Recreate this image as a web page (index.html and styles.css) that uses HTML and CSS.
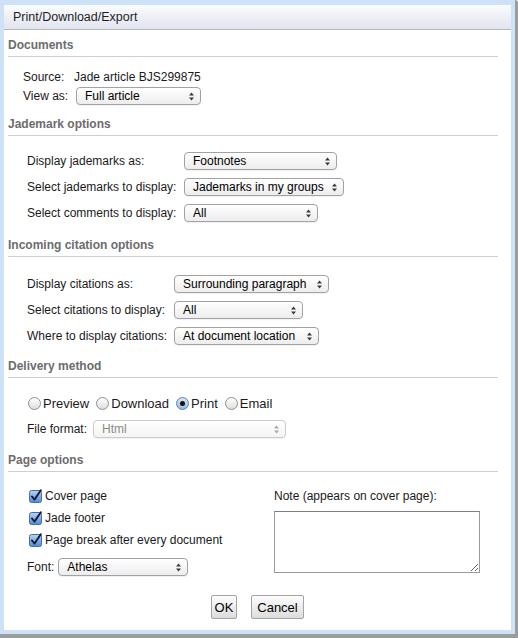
FILE: index.html
```html
<!DOCTYPE html>
<html>
<head>
<meta charset="utf-8">
<title>Print/Download/Export</title>
<link rel="stylesheet" href="styles.css">
</head>
<body>
<div class="frame">
  <div class="dialog">
    <div class="titlebar">Print/Download/Export</div>
    <div class="content">

      <section class="sec sec-docs">
        <h2 class="sec-title">Documents</h2>
        <div class="grid grid-docs">
          <span class="lbl">Source:</span>
          <span class="val">Jade article BJS299875</span>
          <span class="lbl">View as:</span>
          <div class="sel sel-view"><span>Full article</span><svg class="arr" width="5" height="9" viewBox="0 0 5 9"><polygon points="0,3.6 2.5,0.6 5,3.6"/><polygon points="0,5.4 2.5,8.4 5,5.4"/></svg></div>
        </div>
      </section>

      <section class="sec sec-jade">
        <h2 class="sec-title">Jademark options</h2>
        <div class="grid grid-jade">
          <span class="lbl">Display jademarks as:</span>
          <div class="sel sel-j1"><span>Footnotes</span><svg class="arr" width="5" height="9" viewBox="0 0 5 9"><polygon points="0,3.6 2.5,0.6 5,3.6"/><polygon points="0,5.4 2.5,8.4 5,5.4"/></svg></div>
          <span class="lbl">Select jademarks to display:</span>
          <div class="sel sel-j2"><span>Jademarks in my groups</span><svg class="arr" width="5" height="9" viewBox="0 0 5 9"><polygon points="0,3.6 2.5,0.6 5,3.6"/><polygon points="0,5.4 2.5,8.4 5,5.4"/></svg></div>
          <span class="lbl">Select comments to display:</span>
          <div class="sel sel-j3"><span>All</span><svg class="arr" width="5" height="9" viewBox="0 0 5 9"><polygon points="0,3.6 2.5,0.6 5,3.6"/><polygon points="0,5.4 2.5,8.4 5,5.4"/></svg></div>
        </div>
      </section>

      <section class="sec sec-cite">
        <h2 class="sec-title">Incoming citation options</h2>
        <div class="grid grid-cite">
          <span class="lbl">Display citations as:</span>
          <div class="sel sel-c1"><span>Surrounding paragraph</span><svg class="arr" width="5" height="9" viewBox="0 0 5 9"><polygon points="0,3.6 2.5,0.6 5,3.6"/><polygon points="0,5.4 2.5,8.4 5,5.4"/></svg></div>
          <span class="lbl">Select citations to display:</span>
          <div class="sel sel-c2"><span>All</span><svg class="arr" width="5" height="9" viewBox="0 0 5 9"><polygon points="0,3.6 2.5,0.6 5,3.6"/><polygon points="0,5.4 2.5,8.4 5,5.4"/></svg></div>
          <span class="lbl">Where to display citations:</span>
          <div class="sel sel-c3"><span>At document location</span><svg class="arr" width="5" height="9" viewBox="0 0 5 9"><polygon points="0,3.6 2.5,0.6 5,3.6"/><polygon points="0,5.4 2.5,8.4 5,5.4"/></svg></div>
        </div>
      </section>

      <section class="sec sec-deliv">
        <h2 class="sec-title">Delivery method</h2>
        <div class="body-deliv">
          <div class="radios">
            <span class="radio"><span class="dot"></span>Preview</span>
            <span class="radio"><span class="dot"></span>Download</span>
            <span class="radio"><span class="dot checked"></span>Print</span>
            <span class="radio"><span class="dot"></span>Email</span>
          </div>
          <div class="row-file">
            <span class="lbl">File format:</span>
            <div class="sel sel-file disabled"><span>Html</span><svg class="arr" width="5" height="9" viewBox="0 0 5 9"><polygon points="0,3.6 2.5,0.6 5,3.6"/><polygon points="0,5.4 2.5,8.4 5,5.4"/></svg></div>
          </div>
        </div>
      </section>

      <section class="sec sec-page">
        <h2 class="sec-title">Page options</h2>
        <div class="body-page">
          <div class="col-left">
            <div class="chk"><svg class="box" width="14" height="14" viewBox="0 0 14 14"><defs><linearGradient id="cb" x1="0" y1="0" x2="0" y2="1"><stop offset="0" stop-color="#b9d4f3"/><stop offset="1" stop-color="#4f8ad8"/></linearGradient></defs><rect x="0.5" y="1.5" width="12" height="12" rx="2" fill="url(#cb)" stroke="#4a6c9e"/><path d="M3 7.5 L5.6 10.6 L11.8 1.2" fill="none" stroke="#0d1a33" stroke-width="1.9" stroke-linecap="round" stroke-linejoin="round"/></svg>Cover page</div>
            <div class="chk"><svg class="box" width="14" height="14" viewBox="0 0 14 14"><rect x="0.5" y="1.5" width="12" height="12" rx="2" fill="url(#cb)" stroke="#4a6c9e"/><path d="M3 7.5 L5.6 10.6 L11.8 1.2" fill="none" stroke="#0d1a33" stroke-width="1.9" stroke-linecap="round" stroke-linejoin="round"/></svg>Jade footer</div>
            <div class="chk"><svg class="box" width="14" height="14" viewBox="0 0 14 14"><rect x="0.5" y="1.5" width="12" height="12" rx="2" fill="url(#cb)" stroke="#4a6c9e"/><path d="M3 7.5 L5.6 10.6 L11.8 1.2" fill="none" stroke="#0d1a33" stroke-width="1.9" stroke-linecap="round" stroke-linejoin="round"/></svg>Page break after every document</div>
            <div class="row-font">
              <span class="lbl">Font:</span>
              <div class="sel sel-font"><span>Athelas</span><svg class="arr" width="5" height="9" viewBox="0 0 5 9"><polygon points="0,3.6 2.5,0.6 5,3.6"/><polygon points="0,5.4 2.5,8.4 5,5.4"/></svg></div>
            </div>
          </div>
          <div class="col-right">
            <div class="note-lbl">Note (appears on cover page):</div>
            <textarea class="note"></textarea>
          </div>
        </div>
      </section>

      <div class="buttons">
        <button class="btn btn-ok">OK</button>
        <button class="btn btn-cancel">Cancel</button>
      </div>

    </div>
  </div>
</div>
</body>
</html>
```

FILE: styles.css
```css
html, body {
  margin: 0;
  padding: 0;
}
body {
  font-family: "Liberation Sans", Arial, sans-serif;
  font-size: 12px;
  color: #1a1a1a;
  background: #ffffff;
}
.frame {
  width: 518px;
  height: 638px;
  box-sizing: border-box;
  background: #cde2f6;
  padding: 5px 4px 4px 4px;
  border-right: 3px solid #9c9c9c;
  border-bottom: 4px solid #9c9c9c;
  border-top-right-radius: 3px;
}
.dialog {
  width: 507px;
  height: 625px;
  background: #ffffff;
  display: flex;
  flex-direction: column;
}
.titlebar {
  height: 24px;
  line-height: 24px;
  padding-left: 9px;
  font-size: 12.5px;
  color: #1e1e1e;
  background: linear-gradient(#fbfcfe, #e2e4ef);
  border-bottom: 1px solid #b4b4bc;
}
.content {
  padding: 0 13px 0 4px;
}
.sec-title {
  margin: 0;
  font-size: 12px;
  font-weight: bold;
  line-height: 14px;
  color: #6c6c6c;
  padding-bottom: 4px;
  border-bottom: 1px solid #cfcfcf;
}
.sec-docs .sec-title { margin-top: 8px; }
.sec-jade .sec-title { margin-top: 12px; }
.sec-cite .sec-title { margin-top: 16px; }
.sec-deliv .sec-title { margin-top: 14px; }
.sec-page .sec-title { margin-top: 15px; }

.grid {
  display: grid;
  align-items: center;
  grid-auto-rows: 18px;
}
.grid .sel { justify-self: start; }
.grid-docs {
  margin-top: 11px;
  padding-left: 15px;
  grid-template-columns: 51px auto;
  row-gap: 1px;
}
.grid-docs .sel { margin-left: 2px; }
.grid-jade {
  margin-top: 16px;
  padding-left: 19px;
  grid-template-columns: 157px auto;
  row-gap: 8px;
}
.grid-cite {
  margin-top: 18px;
  padding-left: 19px;
  grid-template-columns: 147px auto;
  row-gap: 8px;
}
.lbl, .val {
  line-height: 18px;
  white-space: nowrap;
}

.sel {
  height: 18px;
  box-sizing: border-box;
  display: flex;
  align-items: center;
  justify-content: space-between;
  border: 1px solid #a2a2a2;
  border-radius: 4px;
  background: linear-gradient(#ffffff, #ededed);
  box-shadow: 0 1px 1px rgba(0,0,0,0.06);
  padding: 0 6px 0 8px;
  font-size: 12px;
  line-height: 16px;
  color: #000;
  white-space: nowrap;
}
.sel .arr { fill: #3a3a3a; flex: none; }
.sel.disabled {
  border-color: #cbcbcb;
  color: #8a8a8a;
  background: linear-gradient(#ffffff, #f4f4f4);
}
.sel.disabled .arr { fill: #a8a8a8; }

.sel-view { width: 125px; }
.sel-j1 { width: 153px; }
.sel-j2 { width: 160px; }
.sel-j3 { width: 134px; }
.sel-c1 { width: 155px; }
.sel-c2 { width: 129px; }
.sel-c3 { width: 145px; }
.sel-file { width: 193px; }
.sel-font { width: 130px; }

.body-deliv {
  margin-top: 16px;
  padding-left: 19px;
  display: flex;
  flex-direction: column;
  gap: 8px;
}
.radios {
  display: flex;
  align-items: center;
  height: 18px;
  font-size: 13px;
  padding-left: 1px;
}
.radio {
  display: flex;
  align-items: center;
  margin-right: 7px;
}
.dot {
  width: 13px;
  height: 13px;
  box-sizing: border-box;
  border-radius: 50%;
  border: 1px solid #8e8e8e;
  background: linear-gradient(#ffffff, #dedede);
  margin-right: 2px;
  display: flex;
  align-items: center;
  justify-content: center;
}
.dot.checked {
  border-color: #5b7fb3;
  background: linear-gradient(#dbe8f8, #95b9e8);
}
.dot.checked::after {
  content: "";
  width: 5px;
  height: 5px;
  border-radius: 50%;
  background: #111;
}
.row-file {
  display: flex;
  align-items: center;
  gap: 6px;
  height: 18px;
}

.body-page {
  margin-top: 13px;
  padding-left: 19px;
  display: flex;
}
.col-left {
  width: 247px;
}
.chk {
  display: flex;
  align-items: center;
  height: 22px;
  white-space: nowrap;
}
.chk .box {
  margin: 0 2px 0 2px;
  flex: none;
}
.row-font {
  margin-top: 7px;
  display: flex;
  align-items: center;
  gap: 4px;
  height: 18px;
}
.col-right {
  display: flex;
  flex-direction: column;
}
.note-lbl {
  line-height: 22px;
  white-space: nowrap;
}
.note {
  margin: 4px 0 0 0;
  width: 206px;
  height: 62px;
  box-sizing: border-box;
  border: 1px solid #9a9a9a;
  border-top-color: #7f7f7f;
  padding: 2px;
  resize: both;
  font-family: "Liberation Sans", Arial, sans-serif;
  font-size: 12px;
}

.buttons {
  margin-top: 19px;
  display: flex;
  justify-content: center;
  gap: 14px;
  padding-left: 9px;
}
.btn {
  height: 24px;
  box-sizing: border-box;
  padding: 0;
  border: 1px solid #a4a4a4;
  border-radius: 2px;
  background: linear-gradient(#fdfdfd, #dcdcdc);
  font-family: "Liberation Sans", Arial, sans-serif;
  font-size: 13px;
  color: #000;
}
.btn-ok { width: 26px; }
.btn-cancel { width: 53px; }
```
